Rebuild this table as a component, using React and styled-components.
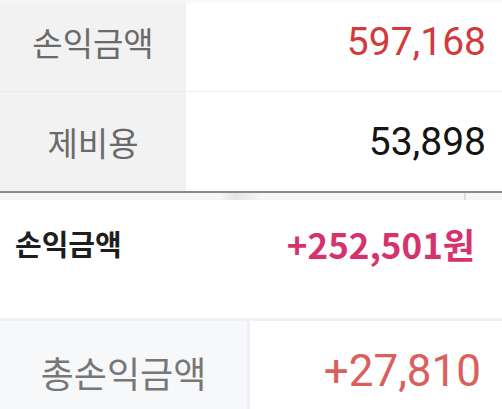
import React from "react";
import styled, { createGlobalStyle } from "styled-components";

const GlobalStyle = createGlobalStyle`
  html, body {
    margin: 0;
    padding: 0;
    background: #fff;
    width: 502px;
    height: 409px;
    overflow: hidden;
  }
  * { box-sizing: border-box; }
`;

const App = () => {
  return (
    <Page>
      <GlobalStyle />
      <Table>
        <TopStrip />
        <Row $height={89} $shift={10} $border>
          <LabelCell>손익금액</LabelCell>
          <ValueCell $color="#d23b3b">597,168</ValueCell>
        </Row>
        <Row $height={99}>
          <LabelCell>제비용</LabelCell>
          <ValueCell $color="#141414">53,898</ValueCell>
        </Row>
      </Table>
      <Divider />
      <Gap>
        <GapShade />
        <GapLine />
      </Gap>
      <Summary>
        <SummaryLabel>손익금액</SummaryLabel>
        <SummaryValue>+252,501원</SummaryValue>
      </Summary>
      <Total>
        <TotalLabel>총손익금액</TotalLabel>
        <TotalValue>+27,810</TotalValue>
      </Total>
    </Page>
  );
};

export default App;

const Page = styled.div`
  width: 502px;
  height: 409px;
  display: flex;
  flex-direction: column;
  background: #fff;
  overflow: hidden;
`;

const Table = styled.div`
  display: flex;
  flex-direction: column;
`;

const TopStrip = styled.div`
  height: 3px;
  background: linear-gradient(to right, #f4f4f4 186px, #fafafa 186px);
`;

const Row = styled.div`
  display: grid;
  grid-template-columns: 186px 1fr;
  height: ${(p) => p.$height}px;
  border-bottom: ${(p) => (p.$border ? "1px solid #ebebeb" : "none")};
  & > * {
    padding-bottom: ${(p) => p.$shift || 0}px;
  }
`;

const LabelCell = styled.div`
  background: #f2f2f2;
  display: flex;
  align-items: center;
  justify-content: center;
  font-family: "Noto Sans CJK KR", sans-serif;
  font-size: 33px;
  color: #6a6a6a;
`;

const ValueCell = styled.div`
  display: flex;
  align-items: center;
  justify-content: flex-end;
  padding-right: 16px;
  font-family: Roboto, sans-serif;
  font-size: 39px;
  color: ${(p) => p.$color};
`;

const Divider = styled.div`
  height: 2px;
  background: #8a8a8a;
`;

const Gap = styled.div`
  height: 7px;
  background: #f6f6f6;
  display: flex;
`;

const GapShade = styled.div`
  width: 40px;
  margin-left: 220px;
  background: linear-gradient(to right, #f6f6f6, #e4e4e4 40%, #f6f6f6);
`;

const GapLine = styled.div`
  width: 2px;
  margin-left: 204px;
  background: #dcdcdc;
`;

const Summary = styled.div`
  height: 118px;
  display: flex;
  justify-content: space-between;
  align-items: flex-start;
  padding: 21px 27px 0 15px;
  font-family: "Noto Sans CJK KR", sans-serif;
  font-weight: 700;
`;

const SummaryLabel = styled.div`
  font-size: 29px;
  color: #1e1e1e;
  margin-top: 1px;
`;

const SummaryValue = styled.div`
  font-size: 35px;
  color: #d6336e;
  margin-top: -3px;
`;

const Total = styled.div`
  flex: 1;
  display: grid;
  grid-template-columns: 250px 1fr;
  border-top: 3px solid #f0f1f4;
`;

const TotalLabel = styled.div`
  background: #f7f8fa;
  border-right: 3px solid #eef0f3;
  display: flex;
  justify-content: center;
  padding-top: 25px;
  font-family: "Noto Sans CJK KR", sans-serif;
  font-size: 36px;
  color: #777;
`;

const TotalValue = styled.div`
  display: flex;
  justify-content: flex-end;
  padding: 24px 21px 0 0;
  font-family: Roboto, sans-serif;
  font-size: 44px;
  color: #d9605c;
`;
